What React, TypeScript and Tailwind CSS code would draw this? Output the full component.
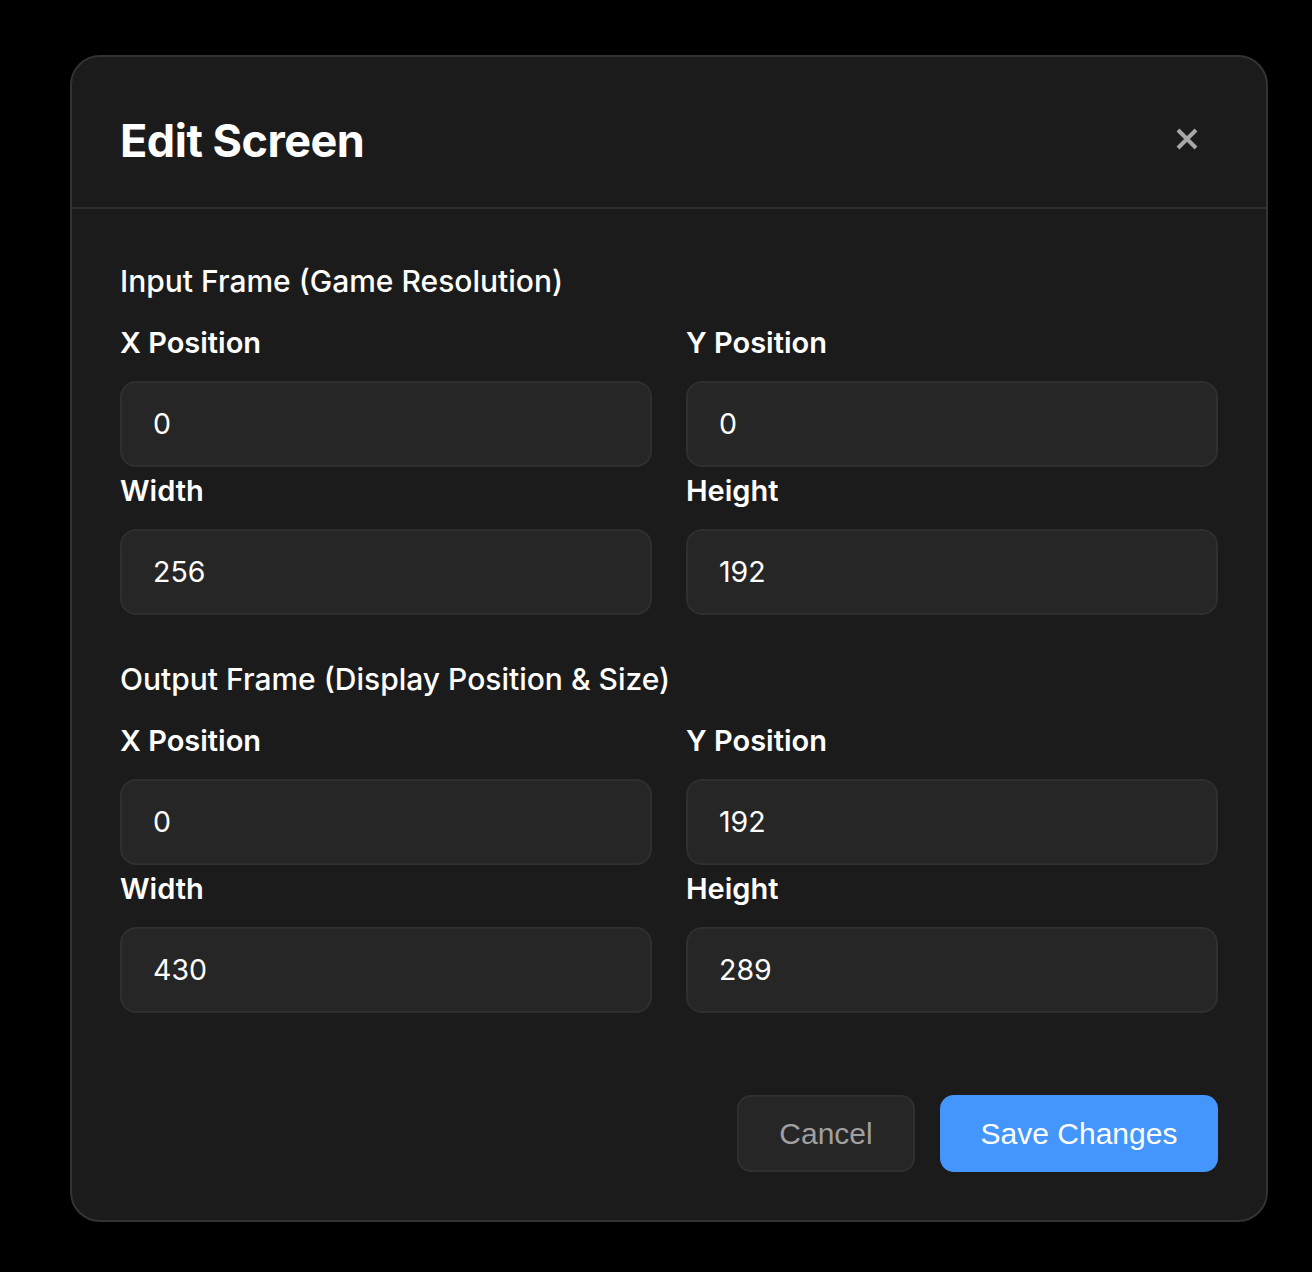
import React from "react";

const font = { fontFamily: "Inter, 'Noto Sans', sans-serif" };

function Field({ label, value }: { label: string; value: string }) {
  return (
    <div className="flex flex-col">
      <label className="text-[29px] leading-[36px] font-semibold text-white mb-[20px]">{label}</label>
      <div className="h-[86px] rounded-[16px] bg-[#262626] border-2 border-[#2f2f2f] flex items-center px-[31px] text-[28.5px] text-white">
        {value}
      </div>
    </div>
  );
}

function Section({ title, vals, top }: { title: string; vals: string[]; top: string }) {
  return (
    <div className={top}>
      <div className="text-[30px] leading-[36px] font-medium text-white mb-[26px]">{title}</div>
      <div className="grid grid-cols-2 gap-x-[34px] gap-y-[6px]">
        <Field label="X Position" value={vals[0]} />
        <Field label="Y Position" value={vals[1]} />
        <Field label="Width" value={vals[2]} />
        <Field label="Height" value={vals[3]} />
      </div>
    </div>
  );
}

export default function App() {
  return (
    <div className="w-[1312px] h-[1272px] bg-black pt-[55px] pl-[70px]" style={font}>
      <div className="w-[1198px] h-[1167px] bg-[#1b1b1b] border-2 border-[#333333] rounded-[30px] flex flex-col">
        <div className="h-[152px] px-[48px] flex items-center justify-between border-b-2 border-[#2e2e2e] shrink-0">
          <h1 className="text-[45px] font-bold text-white tracking-[-0.5px] mt-[18px]">Edit Screen</h1>
          <button className="w-[44px] h-[44px] flex items-center justify-center mr-[9px] mt-[14px]">
            <svg width="22" height="22" viewBox="0 0 22 22" fill="none" stroke="#a8a8a8" strokeWidth="4" strokeLinecap="butt">
              <path d="M2 2L20 20M20 2L2 20" />
            </svg>
          </button>
        </div>
        <div className="px-[48px] pt-[54px]">
          <Section title="Input Frame (Game Resolution)" vals={["0", "0", "256", "192"]} top="" />
          <Section title="Output Frame (Display Position & Size)" vals={["0", "192", "430", "289"]} top="mt-[46px]" />
          <div className="flex justify-end gap-[25px] mt-[82px]">
            <button
              className="w-[178px] h-[77px] rounded-[14px] bg-[#262626] border-2 border-[#2f2f2f] text-[30px] text-[#a0a0a0]"
              style={{ fontFamily: "'Liberation Sans', Arial, sans-serif" }}
            >
              Cancel
            </button>
            <button
              className="w-[278px] h-[77px] rounded-[14px] bg-[#4496fc] text-[30px] text-white"
              style={{ fontFamily: "'Liberation Sans', Arial, sans-serif" }}
            >
              Save Changes
            </button>
          </div>
        </div>
      </div>
    </div>
  );
}
